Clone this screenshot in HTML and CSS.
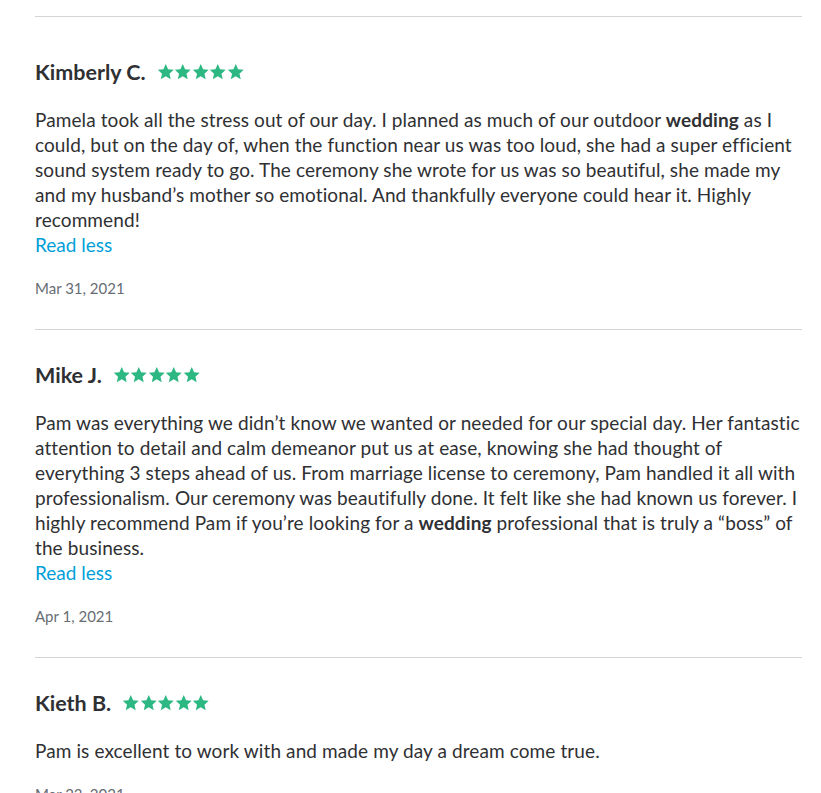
FILE: index.html
```html
<!DOCTYPE html>
<html lang="en">
<head>
<meta charset="utf-8">
<link rel="stylesheet" href="styles.css">
</head>
<body>
<div class="reviews">
  <div class="review first">
    <div class="head">
      <span class="name">Kimberly C.</span>
      <span class="stars">
        <svg viewBox="0 0 24 24"><path d="M12 1.5l3.2 7.1 7.7.8-5.8 5.2 1.7 7.6L12 18.3l-6.8 3.9 1.7-7.6-5.8-5.2 7.7-.8z"/></svg><svg viewBox="0 0 24 24"><path d="M12 1.5l3.2 7.1 7.7.8-5.8 5.2 1.7 7.6L12 18.3l-6.8 3.9 1.7-7.6-5.8-5.2 7.7-.8z"/></svg><svg viewBox="0 0 24 24"><path d="M12 1.5l3.2 7.1 7.7.8-5.8 5.2 1.7 7.6L12 18.3l-6.8 3.9 1.7-7.6-5.8-5.2 7.7-.8z"/></svg><svg viewBox="0 0 24 24"><path d="M12 1.5l3.2 7.1 7.7.8-5.8 5.2 1.7 7.6L12 18.3l-6.8 3.9 1.7-7.6-5.8-5.2 7.7-.8z"/></svg><svg viewBox="0 0 24 24"><path d="M12 1.5l3.2 7.1 7.7.8-5.8 5.2 1.7 7.6L12 18.3l-6.8 3.9 1.7-7.6-5.8-5.2 7.7-.8z"/></svg>
      </span>
    </div>
    <p class="text">Pamela took all the stress out of our day. I planned as much of our outdoor <b>wedding</b> as I could, but on the day of, when the function near us was too loud, she had a super efficient sound system ready to go. The ceremony she wrote for us was so beautiful, she made my and my husband’s mother so emotional. And thankfully everyone could hear it. Highly recommend!</p>
    <a class="more" href="#">Read less</a>
    <div class="date">Mar 31, 2021</div>
  </div>
  <div class="review">
    <div class="head">
      <span class="name">Mike J.</span>
      <span class="stars">
        <svg viewBox="0 0 24 24"><path d="M12 1.5l3.2 7.1 7.7.8-5.8 5.2 1.7 7.6L12 18.3l-6.8 3.9 1.7-7.6-5.8-5.2 7.7-.8z"/></svg><svg viewBox="0 0 24 24"><path d="M12 1.5l3.2 7.1 7.7.8-5.8 5.2 1.7 7.6L12 18.3l-6.8 3.9 1.7-7.6-5.8-5.2 7.7-.8z"/></svg><svg viewBox="0 0 24 24"><path d="M12 1.5l3.2 7.1 7.7.8-5.8 5.2 1.7 7.6L12 18.3l-6.8 3.9 1.7-7.6-5.8-5.2 7.7-.8z"/></svg><svg viewBox="0 0 24 24"><path d="M12 1.5l3.2 7.1 7.7.8-5.8 5.2 1.7 7.6L12 18.3l-6.8 3.9 1.7-7.6-5.8-5.2 7.7-.8z"/></svg><svg viewBox="0 0 24 24"><path d="M12 1.5l3.2 7.1 7.7.8-5.8 5.2 1.7 7.6L12 18.3l-6.8 3.9 1.7-7.6-5.8-5.2 7.7-.8z"/></svg>
      </span>
    </div>
    <p class="text">Pam was everything we didn’t know we wanted or needed for our special day. Her fantastic attention to detail and calm demeanor put us at ease, knowing she had thought of everything 3 steps ahead of us. From marriage license to ceremony, Pam handled it all with professionalism. Our ceremony was beautifully done. It felt like she had known us forever. I highly recommend Pam if you’re looking for a <b>wedding</b> professional that is truly a “boss” of the business.</p>
    <a class="more" href="#">Read less</a>
    <div class="date">Apr 1, 2021</div>
  </div>
  <div class="review">
    <div class="head">
      <span class="name">Kieth B.</span>
      <span class="stars">
        <svg viewBox="0 0 24 24"><path d="M12 1.5l3.2 7.1 7.7.8-5.8 5.2 1.7 7.6L12 18.3l-6.8 3.9 1.7-7.6-5.8-5.2 7.7-.8z"/></svg><svg viewBox="0 0 24 24"><path d="M12 1.5l3.2 7.1 7.7.8-5.8 5.2 1.7 7.6L12 18.3l-6.8 3.9 1.7-7.6-5.8-5.2 7.7-.8z"/></svg><svg viewBox="0 0 24 24"><path d="M12 1.5l3.2 7.1 7.7.8-5.8 5.2 1.7 7.6L12 18.3l-6.8 3.9 1.7-7.6-5.8-5.2 7.7-.8z"/></svg><svg viewBox="0 0 24 24"><path d="M12 1.5l3.2 7.1 7.7.8-5.8 5.2 1.7 7.6L12 18.3l-6.8 3.9 1.7-7.6-5.8-5.2 7.7-.8z"/></svg><svg viewBox="0 0 24 24"><path d="M12 1.5l3.2 7.1 7.7.8-5.8 5.2 1.7 7.6L12 18.3l-6.8 3.9 1.7-7.6-5.8-5.2 7.7-.8z"/></svg>
      </span>
    </div>
    <p class="text">Pam is excellent to work with and made my day a dream come true.</p>
    <div class="date">Mar 23, 2021</div>
  </div>
</div>
</body>
</html>
```
FILE: styles.css
```css
html, body {
  margin: 0;
  padding: 0;
  background: #fff;
}
body {
  font-family: Lato, "Open Sans", sans-serif;
  color: #2f3033;
  overflow: hidden;
  height: 793px;
}
.reviews {
  margin: 16px 19px 0 35px;
}
.review {
  border-top: 1px solid #d3d4d5;
  padding: 31px 0 31px;
}
.review.first {
  padding-top: 41px;
}
.head {
  display: flex;
  align-items: center;
  height: 28px;
}
.name {
  font-size: 21.5px;
  font-weight: 700;
  line-height: 28px;
}
.stars {
  display: flex;
  gap: 0;
  margin-left: 11px;
}
.stars svg {
  width: 17.5px;
  height: 17.5px;
  fill: #2db783;
}
.text {
  margin: 21px 0 0;
  font-size: 19px;
  line-height: 25px;
  letter-spacing: 0.1px;
}
.text b {
  font-weight: 700;
}
.more {
  display: block;
  font-size: 19px;
  line-height: 25px;
  color: #009fd9;
  text-decoration: none;
}
.date {
  margin-top: 21px;
  font-size: 15px;
  line-height: 20px;
  color: #676d73;
}
```
